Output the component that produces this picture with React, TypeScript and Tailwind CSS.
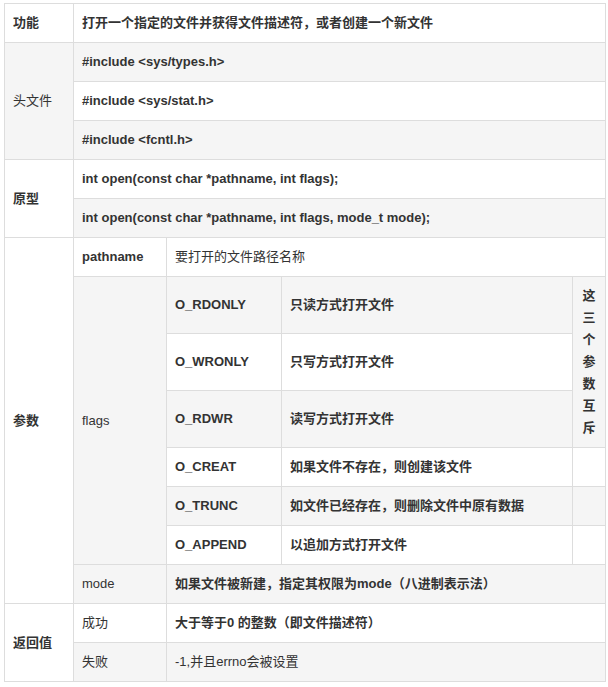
const g = 'bg-[#f5f5f5]'
const w = 'bg-white'
const c = 'border border-[#dddddd] px-[8px] align-middle'

export default function App() {
  return (
    <div className="bg-white min-h-screen pt-[3px] pl-[4px]" style={{ fontFamily: '"Liberation Sans", "Noto Sans CJK SC", sans-serif' }}>
      <table className="table-fixed border-collapse text-[13px] text-[#333333] w-[601px]">
        <colgroup>
          <col className="w-[69px]" />
          <col className="w-[93px]" />
          <col className="w-[115px]" />
          <col className="w-[291px]" />
          <col className="w-[33px]" />
        </colgroup>
        <tbody>
          <tr className="h-[39px]">
            <td className={`${c} ${w} font-bold`}>功能</td>
            <td colSpan={4} className={`${c} ${w} font-bold`}>打开一个指定的文件并获得文件描述符，或者创建一个新文件</td>
          </tr>
          <tr className="h-[39px]">
            <td rowSpan={3} className={`${c} ${g}`}>头文件</td>
            <td colSpan={4} className={`${c} ${g} font-bold`}>#include &lt;sys/types.h&gt;</td>
          </tr>
          <tr className="h-[39px]">
            <td colSpan={4} className={`${c} ${w} font-bold`}>#include &lt;sys/stat.h&gt;</td>
          </tr>
          <tr className="h-[39px]">
            <td colSpan={4} className={`${c} ${g} font-bold`}>#include &lt;fcntl.h&gt;</td>
          </tr>
          <tr className="h-[39px]">
            <td rowSpan={2} className={`${c} ${w} font-bold`}>原型</td>
            <td colSpan={4} className={`${c} ${w} font-bold`}>int open(const char *pathname, int flags);</td>
          </tr>
          <tr className="h-[39px]">
            <td colSpan={4} className={`${c} ${g} font-bold`}>int open(const char *pathname, int flags, mode_t mode);</td>
          </tr>
          <tr className="h-[39px]">
            <td rowSpan={8} className={`${c} ${w} font-bold`}>参数</td>
            <td className={`${c} ${w} font-bold`}>pathname</td>
            <td colSpan={3} className={`${c} ${w}`}>要打开的文件路径名称</td>
          </tr>
          <tr className="h-[57px]">
            <td rowSpan={6} className={`${c} ${g}`}>flags</td>
            <td className={`${c} ${g} font-bold`}>O_RDONLY</td>
            <td className={`${c} ${g} font-bold`}>只读方式打开文件</td>
            <td rowSpan={3} className={`${g} border border-[#dddddd] px-[9px] text-center font-bold leading-[22px] break-all`}>这三个参数互斥</td>
          </tr>
          <tr className="h-[57px]">
            <td className={`${c} ${w} font-bold`}>O_WRONLY</td>
            <td className={`${c} ${w} font-bold`}>只写方式打开文件</td>
          </tr>
          <tr className="h-[57px]">
            <td className={`${c} ${g} font-bold`}>O_RDWR</td>
            <td className={`${c} ${g} font-bold`}>读写方式打开文件</td>
          </tr>
          <tr className="h-[39px]">
            <td className={`${c} ${w} font-bold`}>O_CREAT</td>
            <td className={`${c} ${w} font-bold`}>如果文件不存在，则创建该文件</td>
            <td className={`${c} ${w}`}></td>
          </tr>
          <tr className="h-[39px]">
            <td className={`${c} ${g} font-bold`}>O_TRUNC</td>
            <td className={`${c} ${g} font-bold`}>如文件已经存在，则删除文件中原有数据</td>
            <td className={`${c} ${g}`}></td>
          </tr>
          <tr className="h-[39px]">
            <td className={`${c} ${w} font-bold`}>O_APPEND</td>
            <td className={`${c} ${w} font-bold`}>以追加方式打开文件</td>
            <td className={`${c} ${w}`}></td>
          </tr>
          <tr className="h-[39px]">
            <td className={`${c} ${g}`}>mode</td>
            <td colSpan={3} className={`${c} ${g} font-bold`}>如果文件被新建，指定其权限为mode（八进制表示法）</td>
          </tr>
          <tr className="h-[39px]">
            <td rowSpan={2} className={`${c} ${w} font-bold`}>返回值</td>
            <td className={`${c} ${w}`}>成功</td>
            <td colSpan={3} className={`${c} ${w} font-bold`}>大于等于0 的整数（即文件描述符）</td>
          </tr>
          <tr className="h-[39px]">
            <td className={`${c} ${g}`}>失败</td>
            <td colSpan={3} className={`${c} ${g}`}>-1,并且errno会被设置</td>
          </tr>
        </tbody>
      </table>
    </div>
  )
}
